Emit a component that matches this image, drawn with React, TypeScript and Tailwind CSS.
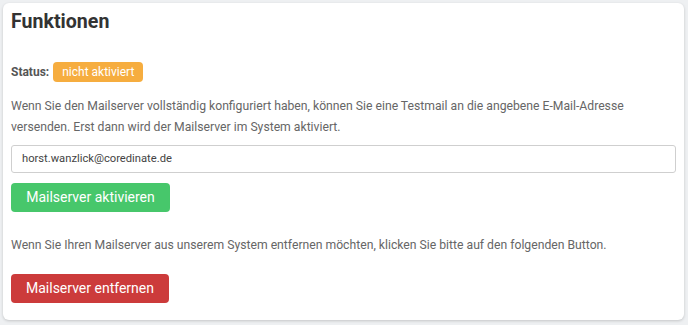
import React from "react";

export default function App() {
  return (
    <div className="w-[688px] h-[325px] bg-[#eef0f2] p-[3px] pb-[5px] pr-[4px]" style={{ fontFamily: "Roboto, 'Noto Sans', sans-serif" }}>
      <div className="h-full bg-white rounded-[6px] shadow-[0_1px_3px_rgba(0,0,0,0.18)] px-[8px] pt-[6px]">
        <h1 className="text-[19.6px] font-bold text-[#333] leading-[26px]">Funktionen</h1>
        <div className="mt-[27px] flex items-center gap-[4px]">
          <span className="text-[12px] font-bold text-[#555]">Status:</span>
          <span className="bg-[#f6ad3f] text-white text-[12px] rounded-[4px] px-[9px] h-[20px] flex items-center">nicht aktiviert</span>
        </div>
        <p className="mt-[14px] text-[12.2px] leading-[21px] text-[#666]">
          Wenn Sie den Mailserver vollständig konfiguriert haben, können Sie eine Testmail an die angebene E-Mail-Adresse versenden. Erst dann wird der Mailserver im System aktiviert.
        </p>
        <div className="mt-[7px] h-[28px] border border-[#cfcfcf] rounded-[3px] flex items-center px-[10px] text-[11.2px] text-[#444]">
          horst.wanzlick@coredinate.de
        </div>
        <button className="mt-[10px] h-[29px] w-[159px] bg-[#47c76b] rounded-[4px] text-white text-[14px]">Mailserver aktivieren</button>
        <p className="mt-[23px] text-[12.2px] leading-[21px] text-[#666]">
          Wenn Sie Ihren Mailserver aus unserem System entfernen möchten, klicken Sie bitte auf den folgenden Button.
        </p>
        <button className="mt-[18px] h-[29px] w-[158px] bg-[#cc3b3b] rounded-[4px] text-white text-[14px]">Mailserver entfernen</button>
      </div>
    </div>
  );
}
